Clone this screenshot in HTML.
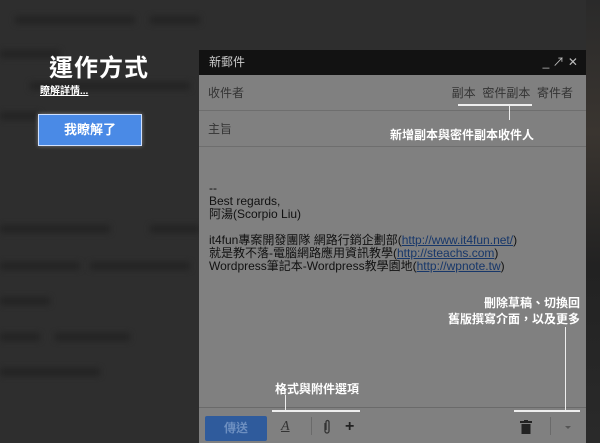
<!DOCTYPE html>
<html><head><meta charset="utf-8"><style>
*{margin:0;padding:0;box-sizing:border-box}
body{width:600px;height:443px;overflow:hidden;background:#2e2e2e;position:relative;font-family:"Liberation Sans","Noto Sans CJK TC",sans-serif}
.bar{position:absolute;height:8px;background:#242424;filter:blur(3px)}
.abs{position:absolute}
.w{color:#fff;font-weight:bold;white-space:nowrap}
.ln{position:absolute;background:#eee}
</style></head><body>
<div class="bar" style="left:15px;top:16px;width:120px"></div>
<div class="bar" style="left:150px;top:16px;width:50px"></div>
<div class="bar" style="left:0;top:50px;width:60px"></div>
<div class="bar" style="left:30px;top:82px;width:160px"></div>
<div class="bar" style="left:0;top:112px;width:40px"></div>
<div class="bar" style="left:0;top:225px;width:110px"></div>
<div class="bar" style="left:150px;top:225px;width:50px"></div>
<div class="bar" style="left:0;top:262px;width:80px"></div>
<div class="bar" style="left:90px;top:262px;width:100px"></div>
<div class="bar" style="left:0;top:297px;width:50px"></div>
<div class="bar" style="left:0;top:333px;width:40px"></div>
<div class="bar" style="left:55px;top:333px;width:75px"></div>
<div class="bar" style="left:0;top:368px;width:100px"></div>

<div class="abs w" style="left:49px;top:48px;font-size:24px;letter-spacing:1px">運作方式</div>
<div class="abs" style="left:40px;top:82px;font-size:10px;color:#fff;text-decoration:underline;font-weight:bold">瞭解詳情...</div>
<div class="abs" style="left:38px;top:114px;width:104px;height:32px;background:#4a8ae6;border:1px solid #cfe0ff;box-shadow:0 0 4px rgba(255,255,255,.4);color:#fff;font-weight:bold;font-size:13px;text-align:center;line-height:30px">我瞭解了</div>

<div class="abs" style="left:586px;top:0;width:14px;height:443px;background:linear-gradient(#2a2a2a,#3a3530 30%,#222 60%,#2a2a2a)"></div>

<div class="abs" style="left:199px;top:50px;width:387px;height:393px;background:#808080">
 <div style="height:25px;background:#121212;color:#ccc;font-size:12px;line-height:25px;padding-left:10px">新郵件
  <span style="position:absolute;right:8px;top:0;color:#bbb;font-size:12px">_ ↗ ✕</span></div>
 <div style="height:36px;border-bottom:1px solid #6e6e6e;color:#333;font-size:12px;line-height:36px;padding-left:9px;position:relative">收件者
  <span style="position:absolute;right:13px;top:0">副本&nbsp; 密件副本&nbsp; 寄件者</span></div>
 <div style="height:36px;border-bottom:1px solid #6e6e6e;color:#333;font-size:12px;line-height:36px;padding-left:9px">主旨</div>
 <div style="padding:35px 0 0 10px;font-size:12px;line-height:13px;color:#111">--<br>Best regards,<br>阿湯(Scorpio Liu)<br><br>it4fun專案開發團隊 網路行銷企劃部(<u style="color:#17376a">http://www.it4fun.net/</u>)<br>就是教不落-電腦網路應用資訊教學(<u style="color:#17376a">http://steachs.com</u>)<br>Wordpress筆記本-Wordpress教學園地(<u style="color:#17376a">http://wpnote.tw</u>)</div>
 <div style="position:absolute;left:0;top:357px;width:387px;height:1px;background:#6a6a6a"></div>
 <div style="position:absolute;left:6px;top:366px;width:62px;height:25px;background:#2f5b9c;color:#6d8fc0;font-weight:bold;font-size:12px;text-align:center;line-height:25px;border-radius:2px">傳送</div>
 <div style="position:absolute;left:82px;top:369px;font-size:14px;font-style:italic;color:#333;text-decoration:underline;font-family:'Liberation Serif',serif">A</div>
 <div style="position:absolute;left:112px;top:367px;width:1px;height:18px;background:#6a6a6a"></div>
 <svg style="position:absolute;left:124px;top:369px" width="8" height="16" viewBox="0 0 8 16"><path d="M2 4v8a2 2 0 0 0 4 0V3a1.5 1.5 0 0 0-3 0v8" fill="none" stroke="#333" stroke-width="1.3"/></svg>
 <div style="position:absolute;left:146px;top:368px;font-size:16px;font-weight:bold;color:#222">+</div>
 <svg style="position:absolute;left:321px;top:370px" width="12" height="14"><rect x="0" y="1" width="12" height="2" fill="#222"/><rect x="4" y="0" width="4" height="2" fill="#222"/><rect x="1.5" y="4" width="9" height="10" fill="#222"/></svg>
 <div style="position:absolute;left:351px;top:367px;width:1px;height:18px;background:#6a6a6a"></div>
 <div style="position:absolute;left:366px;top:376px;border-left:3px solid transparent;border-right:3px solid transparent;border-top:3px solid #555"></div>
</div>

<div class="ln" style="left:458px;top:104px;width:74px;height:2px"></div>
<div class="ln" style="left:509px;top:105px;width:1px;height:15px"></div>
<div class="abs w" style="left:390px;top:126px;font-size:12px">新增副本與密件副本收件人</div>

<div class="abs w" style="left:275px;top:380px;font-size:12px">格式與附件選項</div>
<div class="ln" style="left:285px;top:395px;width:1px;height:16px"></div>
<div class="ln" style="left:272px;top:410px;width:88px;height:2px"></div>

<div class="abs w" style="right:20px;top:295px;font-size:12px;text-align:right;line-height:16px">刪除草稿、切換回<br>舊版撰寫介面，以及更多</div>
<div class="ln" style="left:565px;top:327px;width:1px;height:84px"></div>
<div class="ln" style="left:514px;top:410px;width:66px;height:2px"></div>
</body></html>
